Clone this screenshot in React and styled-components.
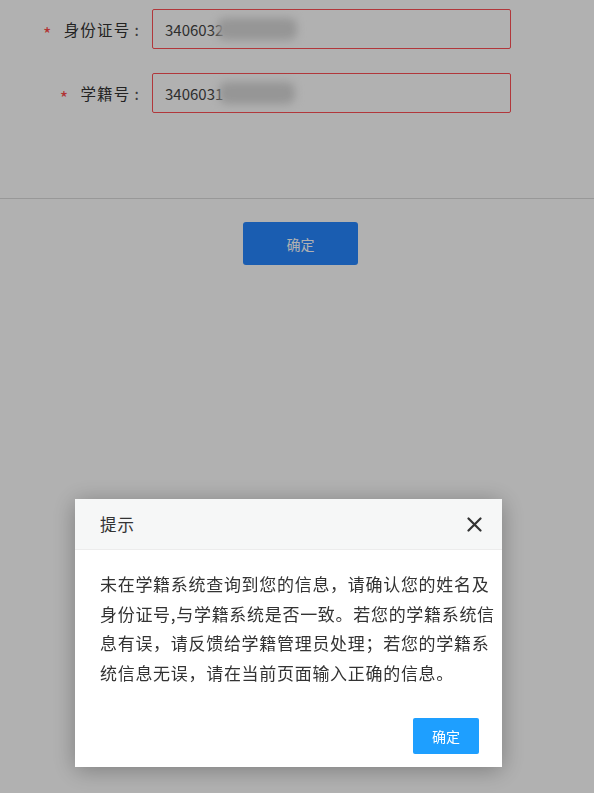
import React from "react";
import styled, { createGlobalStyle } from "styled-components";

const Global = createGlobalStyle`
  html, body { margin: 0; padding: 0; background: #ffffff; }
  body {
    font-family: "Noto Sans CJK SC", "Noto Sans", sans-serif;
    color: #333;
    width: 594px;
    height: 793px;
    overflow: hidden;
  }
  * { box-sizing: border-box; }
`;

const Page = styled.div`
  width: 594px;
  height: 793px;
  background: #fff;
`;

const FormSection = styled.section`
  padding: 9px 0 0;
  height: 199px;
  border-bottom: 1px solid #dcdcdc;
  display: flex;
  flex-direction: column;
  gap: 24px;
`;

const FormRow = styled.div`
  display: grid;
  grid-template-columns: 152px 359px;
  align-items: center;
  height: 40px;
`;

const Label = styled.label`
  display: flex;
  justify-content: flex-end;
  align-items: center;
  padding-right: 12px;
  font-size: 15.5px;
  letter-spacing: 1.2px;
  color: #333;
`;

const Star = styled.span`
  color: #ff4a4a;
  font-size: 18px;
  line-height: 1;
  padding-top: 7px;
  margin-right: 11px;
`;

const Colon = styled.span`
  margin-left: 4px;
  color: #555;
`;

const InputBox = styled.div`
  height: 40px;
  border: 1.5px solid #ff5055;
  border-radius: 2px;
  display: flex;
  align-items: center;
  padding-left: 12px;
  font-size: 15px;
  color: #444;
`;

const Blur = styled.span`
  display: inline-block;
  width: ${(p) => p.$w}px;
  height: 22px;
  margin-left: ${(p) => p.$ml}px;
  background: #d8d8d8;
  border-radius: 8px;
  filter: blur(4px);
`;

const ButtonRow = styled.div`
  display: flex;
  justify-content: center;
  padding: 23px 0 0 7px;
`;

const PrimaryButton = styled.button`
  width: 115px;
  height: 43px;
  border: none;
  border-radius: 3px;
  background: #2687ff;
  color: #fff;
  font-family: inherit;
  font-size: 14px;
`;

const Overlay = styled.div`
  position: fixed;
  inset: 0;
  background: rgba(0, 0, 0, 0.305);
`;

const Modal = styled.div`
  position: absolute;
  left: 75px;
  top: 499px;
  width: 427px;
  height: 268px;
  background: #fff;
  box-shadow: 0 3px 22px rgba(0, 0, 0, 0.3);
  display: flex;
  flex-direction: column;
`;

const ModalHeader = styled.div`
  height: 51px;
  background: #f6f7f7;
  border-bottom: 1px solid #ececec;
  display: flex;
  align-items: center;
  justify-content: space-between;
  padding: 0 20px 0 25px;
`;

const ModalTitle = styled.span`
  font-size: 16.5px;
  color: #333;
  letter-spacing: 1px;
`;

const CloseButton = styled.button`
  border: none;
  background: none;
  padding: 0;
  width: 16px;
  height: 16px;
  display: flex;
  align-items: center;
  justify-content: center;
`;

const ModalBody = styled.div`
  padding: 19px 3px 0 25px;
  font-size: 17px;
  letter-spacing: 0.7px;
  line-height: 29.5px;
  color: #333;
`;

const ModalFooter = styled.div`
  margin-top: auto;
  display: flex;
  justify-content: flex-end;
  padding: 0 23px 13px;
`;

const ModalButton = styled.button`
  width: 66px;
  height: 36px;
  border: none;
  border-radius: 2px;
  background: #1e9fff;
  color: #fff;
  font-family: inherit;
  font-size: 14px;
`;

export default function App() {
  return (
    <>
      <Global />
      <Page>
        <FormSection>
          <FormRow>
            <Label>
              <Star>*</Star>身份证号<Colon>:</Colon>
            </Label>
            <InputBox>
              3406032
              <Blur $w={80} $ml={-6} />
            </InputBox>
          </FormRow>
          <FormRow>
            <Label>
              <Star>*</Star>学籍号<Colon>:</Colon>
            </Label>
            <InputBox>
              3406031
              <Blur $w={76} $ml={-4} />
            </InputBox>
          </FormRow>
        </FormSection>
        <ButtonRow>
          <PrimaryButton>确定</PrimaryButton>
        </ButtonRow>
      </Page>
      <Overlay>
        <Modal>
          <ModalHeader>
            <ModalTitle>提示</ModalTitle>
            <CloseButton aria-label="关闭">
              <svg width="15" height="15" viewBox="0 0 15 15">
                <path d="M1.5 1.5 L13.5 13.5 M13.5 1.5 L1.5 13.5" stroke="#333" strokeWidth="2.2" strokeLinecap="round" />
              </svg>
            </CloseButton>
          </ModalHeader>
          <ModalBody>
            未在学籍系统查询到您的信息，请确认您的姓名及身份证号,与学籍系统是否一致。若您的学籍系统信息有误，请反馈给学籍管理员处理；若您的学籍系统信息无误，请在当前页面输入正确的信息。
          </ModalBody>
          <ModalFooter>
            <ModalButton>确定</ModalButton>
          </ModalFooter>
        </Modal>
      </Overlay>
    </>
  );
}
